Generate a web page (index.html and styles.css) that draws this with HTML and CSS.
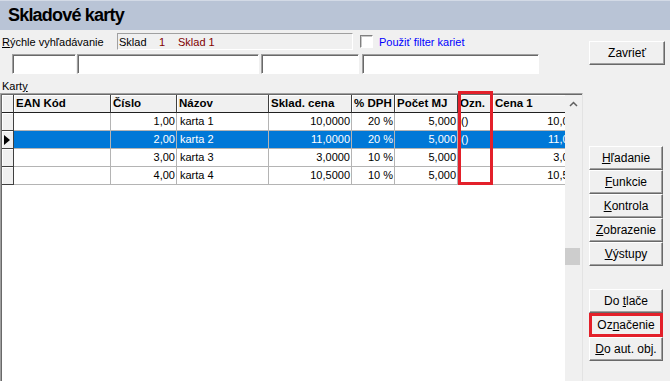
FILE: index.html
```html
<!DOCTYPE html>
<html>
<head>
    <title>Skladové karty</title>
    <link rel="stylesheet" href="styles.css">
</head>
<body>
    <div class="window">
        <div class="title-bar">Skladové karty</div>
        <div class="content">
            <div class="main">
                <div class="filter-row">
                    <div class="filter-label"><u>R</u>ýchle vyhľadávanie</div>
                    <div class="store-box">
                        <span class="store-name">Sklad</span>
                        <span class="store-no">1</span>
                        <span class="store-title">Sklad 1</span>
                    </div>
                    <div class="checkbox"></div>
                    <div class="check-label">Použiť filter kariet</div>
                </div>
                <div class="search-row">
                    <div class="field f1"></div>
                    <div class="field f2"></div>
                    <div class="field f3"></div>
                    <div class="field f4"></div>
                </div>
                <div class="grid-label">Kart<u>y</u></div>
                <div class="grid">
                    <div class="grid-inner">
                        <div class="table-area">
                            <div class="row head">
                                <div class="cell ind"></div>
                                <div class="cell">EAN Kód</div>
                                <div class="cell">Číslo</div>
                                <div class="cell">Názov</div>
                                <div class="cell">Sklad. cena</div>
                                <div class="cell">% DPH</div>
                                <div class="cell">Počet MJ</div>
                                <div class="cell">Ozn.</div>
                                <div class="cell">Cena 1</div>
                            </div>
                            <div class="row">
                                <div class="cell ind"></div>
                                <div class="cell"></div>
                                <div class="cell num">1,00</div>
                                <div class="cell">karta 1</div>
                                <div class="cell num">10,0000</div>
                                <div class="cell num">20 %</div>
                                <div class="cell num">5,000</div>
                                <div class="cell">()</div>
                                <div class="cell num">10,0000</div>
                            </div>
                            <div class="row selected">
                                <div class="cell ind"><span class="pointer"></span></div>
                                <div class="cell"></div>
                                <div class="cell num">2,00</div>
                                <div class="cell">karta 2</div>
                                <div class="cell num">11,0000</div>
                                <div class="cell num">20 %</div>
                                <div class="cell num">5,000</div>
                                <div class="cell">()</div>
                                <div class="cell num">11,0000</div>
                            </div>
                            <div class="row">
                                <div class="cell ind"></div>
                                <div class="cell"></div>
                                <div class="cell num">3,00</div>
                                <div class="cell">karta 3</div>
                                <div class="cell num">3,0000</div>
                                <div class="cell num">10 %</div>
                                <div class="cell num">5,000</div>
                                <div class="cell"></div>
                                <div class="cell num">3,0000</div>
                            </div>
                            <div class="row">
                                <div class="cell ind"></div>
                                <div class="cell"></div>
                                <div class="cell num">4,00</div>
                                <div class="cell">karta 4</div>
                                <div class="cell num">10,5000</div>
                                <div class="cell num">10 %</div>
                                <div class="cell num">5,000</div>
                                <div class="cell"></div>
                                <div class="cell num">10,5000</div>
                            </div>
                        </div>
                        <div class="scrollbar">
                            <div class="scroll-btn">
                                <svg width="9" height="6" viewBox="0 0 9 6"><polyline points="1,5 4.5,1.5 8,5" fill="none" stroke="#606060" stroke-width="1.5"/></svg>
                            </div>
                            <div class="scroll-thumb"></div>
                        </div>
                    </div>
                    <div class="mark-col"></div>
                </div>
            </div>
            <div class="side">
                <button class="btn close">Zavrieť</button>
                <div class="btn-group first">
                    <button class="btn"><u>H</u>ľadanie</button>
                    <button class="btn"><u>F</u>unkcie</button>
                    <button class="btn"><u>K</u>ontrola</button>
                    <button class="btn"><u>Z</u>obrazenie</button>
                    <button class="btn"><u>V</u>ýstupy</button>
                </div>
                <div class="btn-group second">
                    <button class="btn">Do <u>t</u>lače</button>
                    <button class="btn marked">Oz<u>n</u>ačenie</button>
                    <button class="btn"><u>D</u>o aut. obj.</button>
                </div>
            </div>
        </div>
    </div>
</body>
</html>
```

FILE: styles.css
```css
body {
    margin: 0;
    font-family: "Liberation Sans", Arial, sans-serif;
    font-size: 11px;
    color: #000;
    background-color: #f0f0f0;
}

.window {
    width: 670px;
    height: 381px;
    overflow: hidden;
    display: flex;
    flex-direction: column;
}

/* Title strip */
.title-bar {
    height: 30px;
    box-sizing: border-box;
    flex: none;
    background-color: #b9c4d6;
    border-top: 1px solid #d3dae6;
    padding-left: 8px;
    font-size: 18px;
    font-weight: bold;
    letter-spacing: -0.8px;
    line-height: 28px;
}

.content {
    flex: 1;
    display: flex;
    min-height: 0;
}

.main {
    width: 583px;
    flex: none;
    display: flex;
    flex-direction: column;
}

/* Quick search row */
.filter-row {
    display: flex;
    align-items: center;
    height: 17px;
    margin-top: 3px;
    padding-left: 2px;
}

.filter-label {
    width: 115px;
}

.store-box {
    width: 236px;
    height: 17px;
    box-sizing: border-box;
    border: 1px solid;
    border-color: #a0a0a0 #fff #fff #a0a0a0;
    display: flex;
    align-items: center;
    padding-left: 1px;
}

.store-name {
    width: 40px;
}

.store-no {
    width: 19px;
    color: #800000;
}

.store-title {
    color: #800000;
}

.checkbox {
    width: 13px;
    height: 13px;
    box-sizing: border-box;
    margin-left: 7px;
    background-color: #fff;
    border: 1px solid;
    border-color: #808080 #fff #fff #808080;
    box-shadow: inset 1px 1px 0 #c8c8c8;
}

.check-label {
    margin-left: 6px;
    color: #0000ff;
}

.search-row {
    display: flex;
    margin-top: 4px;
    padding-left: 12px;
    height: 20px;
}

.field {
    height: 20px;
    box-sizing: border-box;
    background-color: #fff;
    border: 1px solid;
    border-color: #a0a0a0 #fff #fff #a0a0a0;
    box-shadow: inset 1px 1px 0 #696969;
}

.f1 { width: 64px; }
.f2 { width: 182px; margin-left: 1px; }
.f3 { width: 98px; margin-left: 2px; }
.f4 { width: 177px; margin-left: 3px; }

.grid-label {
    height: 22px;
    box-sizing: border-box;
    padding: 5px 0 0 2px;
    line-height: 14px;
}

/* Data grid */
.grid {
    position: relative;
    height: 300px;
    flex: none;
    border-top: 1px solid #a0a0a0;
    border-left: 1px solid #a0a0a0;
    border-right: 1px solid #e3e3e3;
    background-color: #fff;
}

.grid-inner {
    height: 100%;
    display: flex;
    border-top: 1px solid #696969;
    border-left: 1px solid #696969;
}

.table-area {
    width: 563px;
    overflow: hidden;
    flex: none;
}

.row {
    display: grid;
    grid-template-columns: 12px 97px 66px 92px 83px 43px 63px 35px 96px;
    height: 18px;
}

.cell {
    box-sizing: border-box;
    border-right: 1px solid #b4b4b4;
    border-bottom: 1px solid #b4b4b4;
    padding: 0 3px;
    line-height: 17px;
    white-space: nowrap;
    overflow: hidden;
}

.cell.num {
    text-align: right;
    padding-right: 1px;
}

.cell.ind {
    padding: 0;
    background-color: #f0f0f0;
    border-right-color: #404040;
    border-bottom-color: #404040;
    box-shadow: inset 1px 1px 0 #fff;
    display: flex;
    align-items: center;
}

.head .cell {
    background-color: #f0f0f0;
    font-weight: bold;
    font-size: 11.5px;
    padding-left: 2px;
    padding-right: 0;
    border-right-color: #404040;
    border-bottom-color: #202020;
    box-shadow: inset 1px 1px 0 #fff;
}

.selected .cell {
    background-color: #0078d7;
    color: #fff;
}

.selected .cell.ind {
    background-color: #f0f0f0;
}

.pointer {
    margin-left: 2px;
    border-left: 6px solid #000;
    border-top: 5px solid transparent;
    border-bottom: 5px solid transparent;
}

.scrollbar {
    width: 17px;
    flex: none;
    background-color: #f0f0f0;
    display: flex;
    flex-direction: column;
}

.scroll-btn {
    height: 17px;
    display: flex;
    align-items: center;
    justify-content: center;
}

.scroll-thumb {
    width: 15px;
    height: 17px;
    margin-top: 136px;
    background-color: #cdcdcd;
}

/* red highlight around the Ozn. column */
.mark-col {
    position: absolute;
    left: 457px;
    top: -3px;
    width: 35px;
    height: 94px;
    box-sizing: border-box;
    border: 3px solid #e3202a;
}

/* Right button column */
.side {
    flex: 1;
    padding-left: 6px;
    display: flex;
    flex-direction: column;
    align-items: flex-start;
}

.btn {
    font-family: inherit;
    font-size: 12px;
    color: #000;
    width: 74px;
    height: 24px;
    box-sizing: border-box;
    padding: 0;
    background-color: #f0f0f0;
    border: 1px solid;
    border-color: #fff #696969 #696969 #fff;
    box-shadow: inset -1px -1px 0 #a0a0a0;
    text-align: center;
}

.btn.close {
    width: 76px;
    margin-top: 11px;
}

.btn-group {
    display: flex;
    flex-direction: column;
}

.btn-group.first {
    margin-top: 81px;
}

.btn-group.second {
    margin-top: 23px;
}

.btn.marked {
    border: 3px solid #e3202a;
    box-shadow: none;
}
```
